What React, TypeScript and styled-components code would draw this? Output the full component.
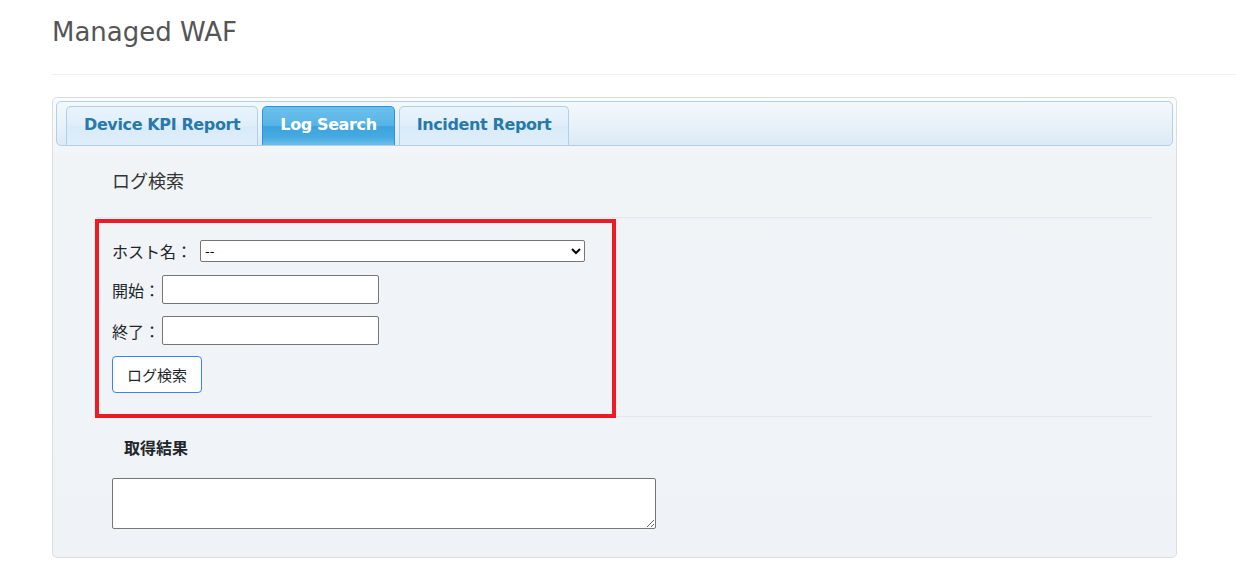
import styled, { createGlobalStyle } from 'styled-components'

const GlobalStyle = createGlobalStyle`
  body {
    margin: 0;
    background: #fff;
    font-family: "DejaVu Sans", Verdana, sans-serif;
  }
`

const Page = styled.div`
  padding: 15px 0 0 52px;
`

const Header = styled.div`
  border-bottom: 1px solid #eceeef;
  padding-bottom: 25px;
`

const Title = styled.h1`
  margin: 0;
  font-size: 26px;
  line-height: 34px;
  font-weight: normal;
  color: #555;
`

const Panel = styled.div`
  width: 1125px;
  box-sizing: border-box;
  margin-top: 22px;
  padding: 3px;
  border: 1px solid #dddddd;
  border-radius: 5px;
  background: linear-gradient(#fbfcfd 0px, #f1f4f7 60px, #eff3f7 100%);
`

const TabBar = styled.ul`
  display: flex;
  align-items: flex-end;
  height: 45px;
  box-sizing: border-box;
  margin: 0;
  padding: 4px 4px 0 9px;
  list-style: none;
  border: 1px solid #aed0ea;
  border-radius: 5px;
  background: linear-gradient(#f4f8fb 0%, #e9f2f9 50%, #dceaf6 100%);
`

interface TabProps {
  active?: boolean
}

const Tab = styled.li<TabProps>`
  height: 39px;
  box-sizing: border-box;
  margin-right: 4px;
  padding: 0 17px;
  line-height: 36px;
  font-size: 16px;
  letter-spacing: -0.38px;
  font-weight: bold;
  border: 1px solid ${({ active }) => (active ? '#2694e8' : '#aed0ea')};
  border-bottom: 0;
  border-radius: 5px 5px 0 0;
  color: ${({ active }) => (active ? '#ffffff' : '#2779aa')};
  background: ${({ active }) =>
    active
      ? 'linear-gradient(#6cc0ec 0%, #57b4e6 48%, #3ca3de 52%, #47aae1 80%, #6ebfea 100%)'
      : 'linear-gradient(#e8f3fc 0%, #e1eefa 48%, #d9eaf8 52%, #dfeefa 100%)'};
`

const Content = styled.div`
  padding: 21px 21px 25px 40px;
  color: #212529;
  font-family: "Noto Sans CJK JP", sans-serif;
`

const Heading = styled.h2`
  margin: 0 0 23px;
  padding-left: 16px;
  font-size: 18px;
  line-height: 27px;
  font-weight: normal;
  color: #333;
`

const Section = styled.div`
  border-top: 1px solid #e3e7eb;
  padding-top: 1px;
`

const SearchBox = styled.div`
  position: relative;
  z-index: 1;
  width: 521px;
  box-sizing: border-box;
  margin-left: -1px;
  padding: 16px 13px 21px;
  border: 4px solid #ed1c24;
  display: flex;
  flex-direction: column;
  gap: 12px;
`

const Divider = styled.div`
  margin-top: -2px;
  border-top: 1px solid #e3e7eb;
`

interface RowProps {
  gap: number
}

const Row = styled.div<RowProps>`
  display: flex;
  align-items: center;
  gap: ${({ gap }) => gap}px;
`

const Label = styled.label`
  font-size: 16px;
  line-height: 24px;
  color: #212529;
`

const Select = styled.select`
  width: 385px;
  height: 22px;
  box-sizing: border-box;
  border: 1px solid #767676;
  border-radius: 2px;
  background: #fff;
  font-family: "DejaVu Sans", sans-serif;
  font-size: 13px;
  color: #000;
`

const TextInput = styled.input`
  width: 217px;
  height: 29px;
  box-sizing: border-box;
  border: 1px solid #767676;
  border-radius: 2px;
  background: #fff;
`

const Button = styled.button`
  width: 90px;
  height: 37px;
  margin-top: -1px;
  border: 1px solid #3b82f6;
  border-radius: 4px;
  background: #fff;
  font-family: "Noto Sans CJK JP", sans-serif;
  font-size: 15px;
  color: #212529;
  cursor: pointer;
`

const ResultTitle = styled.h3`
  margin: 18px 0 19px;
  padding-left: 28px;
  font-size: 16px;
  line-height: 24px;
  font-weight: bold;
  color: #212529;
`

const ResultArea = styled.textarea`
  display: block;
  width: 544px;
  height: 51px;
  box-sizing: border-box;
  margin-left: 16px;
  border: 1px solid #767676;
  border-radius: 2px;
  background: #fff;
`

const tabs = [
  { label: 'Device KPI Report', active: false },
  { label: 'Log Search', active: true },
  { label: 'Incident Report', active: false },
]

export default function App() {
  return (
    <>
      <GlobalStyle />
      <Page>
        <Header>
          <Title>Managed WAF</Title>
        </Header>
        <Panel>
          <TabBar>
            {tabs.map(({ label, active }) => (
              <Tab key={label} active={active}>
                {label}
              </Tab>
            ))}
          </TabBar>
          <Content>
            <Heading>ログ検索</Heading>
            <Section>
              <SearchBox>
                <Row gap={8}>
                  <Label>ホスト名：</Label>
                  <Select defaultValue="">
                    <option value="">--</option>
                  </Select>
                </Row>
                <Row gap={2}>
                  <Label>開始：</Label>
                  <TextInput type="text" />
                </Row>
                <Row gap={2}>
                  <Label>終了：</Label>
                  <TextInput type="text" />
                </Row>
                <Row gap={0}>
                  <Button type="button">ログ検索</Button>
                </Row>
              </SearchBox>
              <Divider />
            </Section>
            <ResultTitle>取得結果</ResultTitle>
            <ResultArea />
          </Content>
        </Panel>
      </Page>
    </>
  )
}
